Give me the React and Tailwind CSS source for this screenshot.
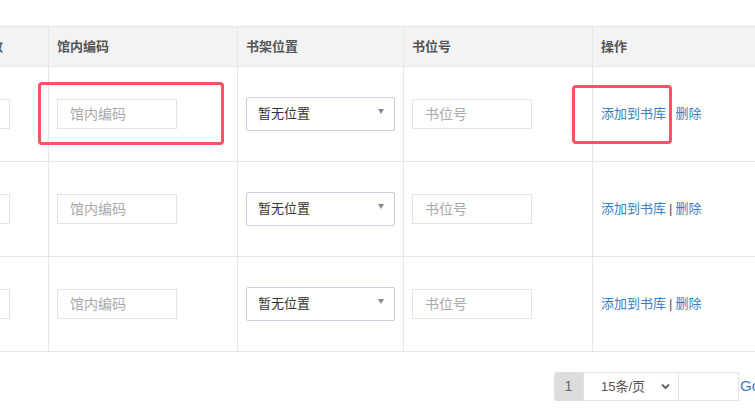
import React from "react";

function Row() {
  return (
    <div className="grid grid-cols-[49px_189px_166px_189px_200px] h-[95px]">
      <div className="border-r border-b border-[#e6e6e6] flex items-center justify-end pr-[38px] overflow-hidden">
        <div className="shrink-0 w-[120px] h-[30px] border border-[#e3e3e3] bg-white"></div>
      </div>
      <div className="border-r border-b border-[#e6e6e6] flex items-center pl-[8px]">
        <div className="w-[120px] h-[30px] border border-[#e3e3e3] bg-white flex items-center pl-[12px] text-[14px] text-[#a9a9a9]">馆内编码</div>
      </div>
      <div className="border-r border-b border-[#e6e6e6] flex items-center pl-[8px]">
        <div className="relative w-[149px] h-[34px] border border-[#c3cfdc] rounded-[2px] bg-white flex items-center pl-[11px] text-[13px] text-[#333]">
          暂无位置
          <span className="absolute right-[10px] top-[11px] w-0 h-0 border-l-[3.5px] border-r-[3.5px] border-t-[5px] border-l-transparent border-r-transparent border-t-[#888]"></span>
        </div>
      </div>
      <div className="border-r border-b border-[#e6e6e6] flex items-center pl-[8px]">
        <div className="w-[120px] h-[30px] border border-[#e3e3e3] bg-white flex items-center pl-[12px] text-[14px] text-[#a9a9a9]">书位号</div>
      </div>
      <div className="border-b border-[#e6e6e6] flex items-center pl-[8px] text-[13px] whitespace-nowrap">
        <span className="text-[#3a7ec6]">添加到书库</span>
        <span className="text-[#555] mx-[3px]">|</span>
        <span className="text-[#3a7ec6]">删除</span>
      </div>
    </div>
  );
}

export default function App() {
  return (
    <div className="relative w-[755px] h-[420px] bg-white overflow-hidden pt-[26px] font-['Liberation_Sans','Noto_Sans_CJK_SC',sans-serif]">
      <div className="border-t border-[#e6e6e6]">
        <div className="grid grid-cols-[49px_189px_166px_189px_200px] h-[40px] bg-[#f3f3f3] text-[13px] font-bold text-[#555]">
          <div className="border-r border-b border-[#e6e6e6] flex items-center justify-end pr-[45px] overflow-hidden whitespace-nowrap">
            <span className="shrink-0">复本数</span>
          </div>
          <div className="border-r border-b border-[#e6e6e6] flex items-center pl-[8px]">馆内编码</div>
          <div className="border-r border-b border-[#e6e6e6] flex items-center pl-[8px]">书架位置</div>
          <div className="border-r border-b border-[#e6e6e6] flex items-center pl-[8px]">书位号</div>
          <div className="border-b border-[#e6e6e6] flex items-center pl-[8px]">操作</div>
        </div>
        <Row />
        <Row />
        <Row />
      </div>

      <div className="flex items-center mt-[20px] pl-[554px] whitespace-nowrap">
        <div className="shrink-0 w-[29px] h-[29px] bg-[#dddddd] rounded-l-[3px] flex items-center justify-center text-[14px] text-[#666]">1</div>
        <div className="shrink-0 relative w-[96px] h-[29px] border border-[#e3e3e3] bg-white flex items-center pl-[17px] text-[13px] text-[#555]">
          15条/页
          <svg className="absolute right-[8px] top-[10px]" width="9" height="7" viewBox="0 0 9 7">
            <path d="M1 1.5 L4.5 5 L8 1.5" fill="none" stroke="#666" strokeWidth="2" />
          </svg>
        </div>
        <div className="shrink-0 w-[60px] h-[29px] border border-[#e3e3e3] border-l-0 bg-white"></div>
        <span className="text-[15px] text-[#3a7ec6] ml-[1px]">Go</span>
      </div>

      <div className="absolute left-[38px] top-[82px] w-[186px] h-[63px] border-[3px] border-[#fb5264] rounded-[4px]"></div>
      <div className="absolute left-[572px] top-[85px] w-[100px] h-[59px] border-[3px] border-[#fb5264] rounded-[4px]"></div>
    </div>
  );
}
